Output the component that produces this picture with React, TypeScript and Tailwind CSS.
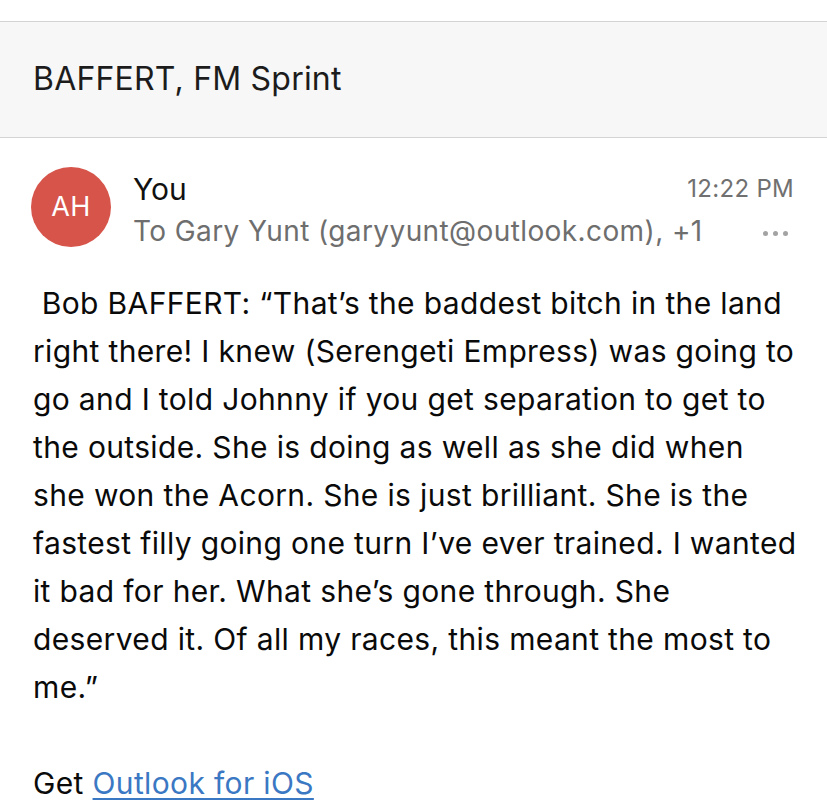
export default function App() {
  return (
    <div className="w-[827px] h-[801px] overflow-hidden bg-white text-[#111] font-['Inter','Liberation_Sans',sans-serif]">
      <div className="h-[21px]" />
      <div className="h-[117px] border-y border-[#d4d4d4] bg-[#f7f7f7] px-[33px] flex items-center">
        <h1 className="text-[32px] tracking-[0.2px] text-[#1c1c1c] pb-[2px]">BAFFERT, FM Sprint</h1>
      </div>

      <div className="flex pl-[31px] pr-[33px] pt-[29px]">
        <div className="w-20 h-20 shrink-0 rounded-full bg-[#d6544a] flex items-center justify-center text-white text-[27px] tracking-[0.5px]">
          AH
        </div>
        <div className="flex-1 ml-[22px] pt-[2px]">
          <div className="flex items-center justify-between h-[40px]">
            <span className="text-[30px] text-[#111]">You</span>
            <span className="text-[24px] tracking-[0.3px] text-[#707070]">12:22 PM</span>
          </div>
          <div className="flex items-center justify-between h-[44px]">
            <span className="text-[28px] text-[#6e6e6e] tracking-[0.4px]">To Gary Yunt (garyyunt@outlook.com), +1</span>
            <span className="flex gap-[5px] pr-[6px] pt-[4px]">
              <span className="w-[5px] h-[5px] rounded-full bg-[#a3a3a3]" />
              <span className="w-[5px] h-[5px] rounded-full bg-[#a3a3a3]" />
              <span className="w-[5px] h-[5px] rounded-full bg-[#a3a3a3]" />
            </span>
          </div>
        </div>
      </div>

      <div className="pl-[33px] pr-[16px] pt-[26px] text-[30px] leading-[48px] tracking-[0.35px] text-[#0a0a0a] whitespace-nowrap">
        <p>
          &nbsp;Bob BAFFERT: “That’s the baddest bitch in the land
          <br />
          right there! I knew (Serengeti Empress) was going to
          <br />
          go and I told Johnny if you get separation to get to
          <br />
          the outside. She is doing as well as she did when
          <br />
          she won the Acorn. She is just brilliant. She is the
          <br />
          fastest filly going one turn I’ve ever trained. I wanted
          <br />
          it bad for her. What she’s gone through. She
          <br />
          deserved it. Of all my races, this meant the most to
          <br />
          me.”
        </p>
        <p>&nbsp;</p>
        <p>
          Get{" "}
          <a href="#" className="text-[#3b78c3] underline underline-offset-[4px] decoration-[2px]">
            Outlook for iOS
          </a>
        </p>
      </div>
    </div>
  );
}
